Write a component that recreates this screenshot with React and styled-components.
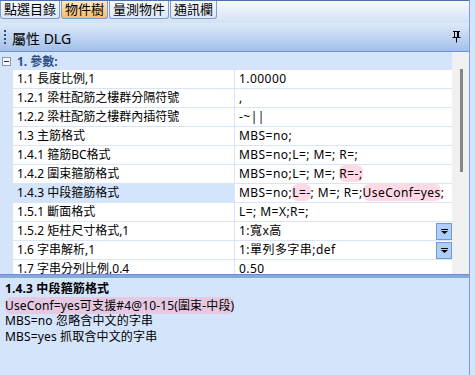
import React from "react";
import styled, { createGlobalStyle } from "styled-components";

const GlobalStyle = createGlobalStyle`
  html, body {
    margin: 0;
    padding: 0;
    background: #d4e4fa;
    overflow: hidden;
  }
  body {
    font-family: "Noto Sans", "Noto Sans CJK TC", sans-serif;
    font-size: 12px;
    color: #000;
  }
`;

const Frame = styled.div`
  width: 469px;
  height: 375px;
  border-right: 1px solid #7b9ed6;
  display: flex;
  flex-direction: column;
  overflow: hidden;
`;

const TabStrip = styled.div`
  height: 23px;
  box-sizing: border-box;
  border-top: 1px solid #4a73ad;
  background: linear-gradient(#f6f9fd, #d3e1f5);
  display: flex;
  align-items: flex-start;
`;

const Tab = styled.div`
  height: 18px;
  box-sizing: border-box;
  padding: 0 3px;
  margin-right: 1px;
  font-size: 13px;
  line-height: 16px;
  border: 1px solid #7f9ccb;
  border-top: none;
  border-radius: 0 0 3px 3px;
  background: ${(p) =>
    p.active
      ? "linear-gradient(#fde8cc, #f8bb64)"
      : "linear-gradient(#f7f9fd, #dbe6f6)"};
  white-space: nowrap;
`;

const Header = styled.div`
  height: 29px;
  box-sizing: border-box;
  background: linear-gradient(#dde9f9, #a3c0ea);
  border-bottom: 1px solid #6b93cf;
  display: flex;
  align-items: center;
  padding: 0 8px 0 4px;
`;

const Grip = styled.div`
  width: 2px;
  height: 14px;
  margin-right: 6px;
  background: repeating-linear-gradient(#2e4d7e 0 2px, transparent 2px 4px);
`;

const Title = styled.div`
  flex: 1;
  font-size: 14px;
  margin-top: 1px;
`;

const GridArea = styled.div`
  height: 222px;
  display: flex;
  overflow: hidden;
`;

const Grid = styled.div`
  flex: 1;
  display: flex;
  flex-direction: column;
  background: #d4e4fa;
`;

const CategoryRow = styled.div`
  height: 18px;
  flex-shrink: 0;
  display: flex;
  align-items: center;
  padding-left: 2px;
  font-weight: bold;
  color: #2d4f86;
`;

const Toggle = styled.div`
  width: 7px;
  height: 7px;
  border: 1px solid #8c99ad;
  background: #f4f6fa;
  margin-right: 6px;
  position: relative;
  &::after {
    content: "";
    position: absolute;
    left: 1px;
    right: 1px;
    top: 3px;
    height: 1px;
    background: #333;
  }
`;

const Row = styled.div`
  height: 19px;
  flex-shrink: 0;
  display: flex;
  margin-left: 13px;
  box-sizing: border-box;
  border-bottom: 1px solid #d8e5f8;
`;

const NameCell = styled.div`
  width: 222px;
  box-sizing: border-box;
  border-right: 1px solid #d8e5f8;
  padding-left: 4px;
  line-height: 18px;
  white-space: nowrap;
  background: ${(p) => (p.selected ? "#d4e4fa" : "#fff")};
`;

const ValueCell = styled.div`
  flex: 1;
  background: #fff;
  padding-left: 4px;
  line-height: 18px;
  letter-spacing: 0.45px;
  white-space: nowrap;
  display: flex;
  align-items: center;
  justify-content: space-between;
`;

const Mark = styled.span`
  background: rgba(255, 160, 190, 0.4);
  border-radius: 6px;
`;

const DropButton = styled.div`
  width: 14px;
  height: 15px;
  border: 1px solid #6f99d6;
  background: #aecdf7;
  display: flex;
  align-items: center;
  justify-content: center;
`;

const Scrollbar = styled.div`
  width: 17px;
  background: #f0f0f0;
  position: relative;
`;

const Thumb = styled.div`
  position: absolute;
  left: 8px;
  top: 17px;
  width: 3px;
  height: 103px;
  background: #858585;
`;

const Splitter = styled.div`
  height: 3px;
  background: #86a8dd;
  border-top: 1px solid #6b8fcb;
`;

const Description = styled.div`
  flex: 1;
  padding: 3px 5px;
  line-height: 15.5px;
  font-size: 12px;
  letter-spacing: 0.15px;
`;

const DescTitle = styled.div`
  font-weight: bold;
  margin-bottom: 1px;
`;

const DropIcon = () => (
  <svg width="7" height="5" viewBox="0 0 7 5">
    <rect x="0" y="0" width="7" height="1" fill="#000" />
    <path d="M0 2h7L3.5 5z" fill="#000" />
  </svg>
);

const PinIcon = () => (
  <svg width="9" height="12" viewBox="0 0 9 12">
    <path d="M1 0.5h7M2.5 0.5v6M6.5 0.5v6M0.5 6.5h8M4.5 6.5v5" stroke="#000" strokeWidth="1" fill="none" />
    <rect x="5" y="1" width="1.5" height="5.5" fill="#000" />
  </svg>
);

const rows = [
  { name: "1.1 長度比例,1", value: "1.00000" },
  { name: "1.2.1 梁柱配筋之樓群分隔符號", value: "," },
  { name: "1.2.2 梁柱配筋之樓群內插符號", value: "-~||" },
  { name: "1.3 主筋格式", value: "MBS=no;" },
  { name: "1.4.1 箍筋BC格式", value: "MBS=no;L=; M=; R=;" },
  {
    name: "1.4.2 圍束箍筋格式",
    value: (
      <span>
        MBS=no;L=; M=; <Mark>R=-;</Mark>
      </span>
    ),
  },
  {
    name: "1.4.3 中段箍筋格式",
    selected: true,
    value: (
      <span>
        MBS=no;<Mark>L=-</Mark>; M=; R=;<Mark>UseConf=yes</Mark>;
      </span>
    ),
  },
  { name: "1.5.1 斷面格式", value: "L=; M=X;R=;" },
  { name: "1.5.2 矩柱尺寸格式,1", value: "1:寬x高", drop: true },
  { name: "1.6 字串解析,1", value: "1:單列多字串;def", drop: true },
  { name: "1.7 字串分列比例,0.4", value: "0.50" },
];

export default function App() {
  return (
    <>
      <GlobalStyle />
      <Frame>
        <TabStrip>
          <Tab>點選目錄</Tab>
          <Tab active>物件樹</Tab>
          <Tab>量測物件</Tab>
          <Tab>通訊欄</Tab>
        </TabStrip>
        <Header>
          <Grip />
          <Title>屬性 DLG</Title>
          <PinIcon />
        </Header>
        <GridArea>
          <Grid>
            <CategoryRow>
              <Toggle />
              1. 參數:
            </CategoryRow>
            {rows.map((r) => (
              <Row key={r.name}>
                <NameCell selected={r.selected}>{r.name}</NameCell>
                <ValueCell>
                  {r.value}
                  {r.drop && (
                    <DropButton>
                      <DropIcon />
                    </DropButton>
                  )}
                </ValueCell>
              </Row>
            ))}
          </Grid>
          <Scrollbar>
            <Thumb />
          </Scrollbar>
        </GridArea>
        <Splitter />
        <Description>
          <DescTitle>1.4.3 中段箍筋格式</DescTitle>
          <div>
            <Mark>UseConf=yes可支援#4@10-15(圍束-中段)</Mark>
          </div>
          <div>MBS=no 忽略含中文的字串</div>
          <div>MBS=yes 抓取含中文的字串</div>
        </Description>
      </Frame>
    </>
  );
}
